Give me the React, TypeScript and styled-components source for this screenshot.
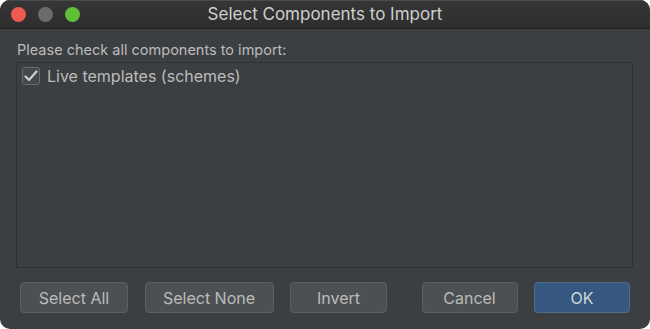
import styled, { createGlobalStyle } from 'styled-components';

const GlobalStyle = createGlobalStyle`
    html, body {
        margin: 0;
        padding: 0;
        background: #ffffff;
    }
    * {
        box-sizing: border-box;
    }
`;

const buttons = [
    { label: 'Select All', width: 108 },
    { label: 'Select None', width: 129 },
    { label: 'Invert', width: 97 },
];

function App() {
    return (
        <>
            <GlobalStyle />
            <Window>
                <TitleBar>
                    <Lights>
                        <Light color="#ee5a52" />
                        <Light color="#6b6b6b" />
                        <Light color="#5fc038" />
                    </Lights>
                    <Title>Select Components to Import</Title>
                </TitleBar>
                <Body>
                    <Hint>Please check all components to import:</Hint>
                    <ListBox>
                        <Row>
                            <CheckBox>
                                <svg width="14" height="12" viewBox="0 0 14 12">
                                    <path
                                        d="M1.5 6.5 L5 10 L12.5 1.5"
                                        fill="none"
                                        stroke="#cfcfcf"
                                        strokeWidth="2.2"
                                        strokeLinecap="round"
                                        strokeLinejoin="round"
                                    />
                                </svg>
                            </CheckBox>
                            <span>Live templates (schemes)</span>
                        </Row>
                    </ListBox>
                    <ButtonBar>
                        <Group>
                            {buttons.map((b) => (
                                <Button key={b.label} width={b.width}>
                                    {b.label}
                                </Button>
                            ))}
                        </Group>
                        <Group>
                            <Button width={96}>Cancel</Button>
                            <Button width={96} primary>
                                OK
                            </Button>
                        </Group>
                    </ButtonBar>
                </Body>
            </Window>
        </>
    );
}

export default App;

const Window = styled.div`
    width: 650px;
    height: 329px;
    border-radius: 10px;
    overflow: hidden;
    background: #3c3f41;
    display: flex;
    flex-direction: column;
    font-family: Inter, 'Liberation Sans', sans-serif;
    color: #bbbbbb;
`;

const TitleBar = styled.div`
    position: relative;
    height: 29px;
    flex: 0 0 29px;
    display: flex;
    align-items: center;
    justify-content: center;
    background: linear-gradient(#363636, #2e2e2e);
    border-bottom: 1px solid #222;
    box-shadow: inset 0 1px 0 #4a4a4a;
`;

const Lights = styled.div`
    position: absolute;
    left: 11px;
    top: 7px;
    display: flex;
    gap: 12px;
`;

const Light = styled.div<{ color: string }>`
    width: 15px;
    height: 15px;
    border-radius: 50%;
    background: ${(p) => p.color};
`;

const Title = styled.div`
    font-size: 17px;
    color: #cfcfcf;
`;

const Body = styled.div`
    flex: 1;
    display: flex;
    flex-direction: column;
    padding: 12px 20px 15px 16px;
`;

const Hint = styled.div`
    font-size: 14.5px;
    line-height: 18px;
    padding-left: 1px;
    margin-bottom: 3px;
`;

const ListBox = styled.div`
    height: 206px;
    margin-right: -3px;
    border: 1px solid #2f3133;
    background: #3c3f41;
    padding: 4px 5px;
`;

const Row = styled.div`
    display: flex;
    align-items: center;
    gap: 7px;
    font-size: 16px;
    height: 18px;
`;

const CheckBox = styled.div`
    width: 18px;
    height: 18px;
    border: 1px solid #6b6b6b;
    border-radius: 3px;
    background: #43494a;
    display: flex;
    align-items: center;
    justify-content: center;
`;

const ButtonBar = styled.div`
    display: flex;
    justify-content: space-between;
    margin-top: 14px;
    padding-left: 4px;
`;

const Group = styled.div`
    display: flex;
    gap: 16.5px;
`;

const Button = styled.div<{ width: number; primary?: boolean }>`
    width: ${(p) => p.width}px;
    height: 31px;
    border-radius: 4px;
    display: flex;
    align-items: center;
    justify-content: center;
    font-size: 16px;
    color: ${(p) => (p.primary ? '#d0d6dc' : '#bbbbbb')};
    background: ${(p) => (p.primary ? '#365880' : '#4c5052')};
    border: 1px solid ${(p) => (p.primary ? '#4c708c' : '#5e6060')};
`;
